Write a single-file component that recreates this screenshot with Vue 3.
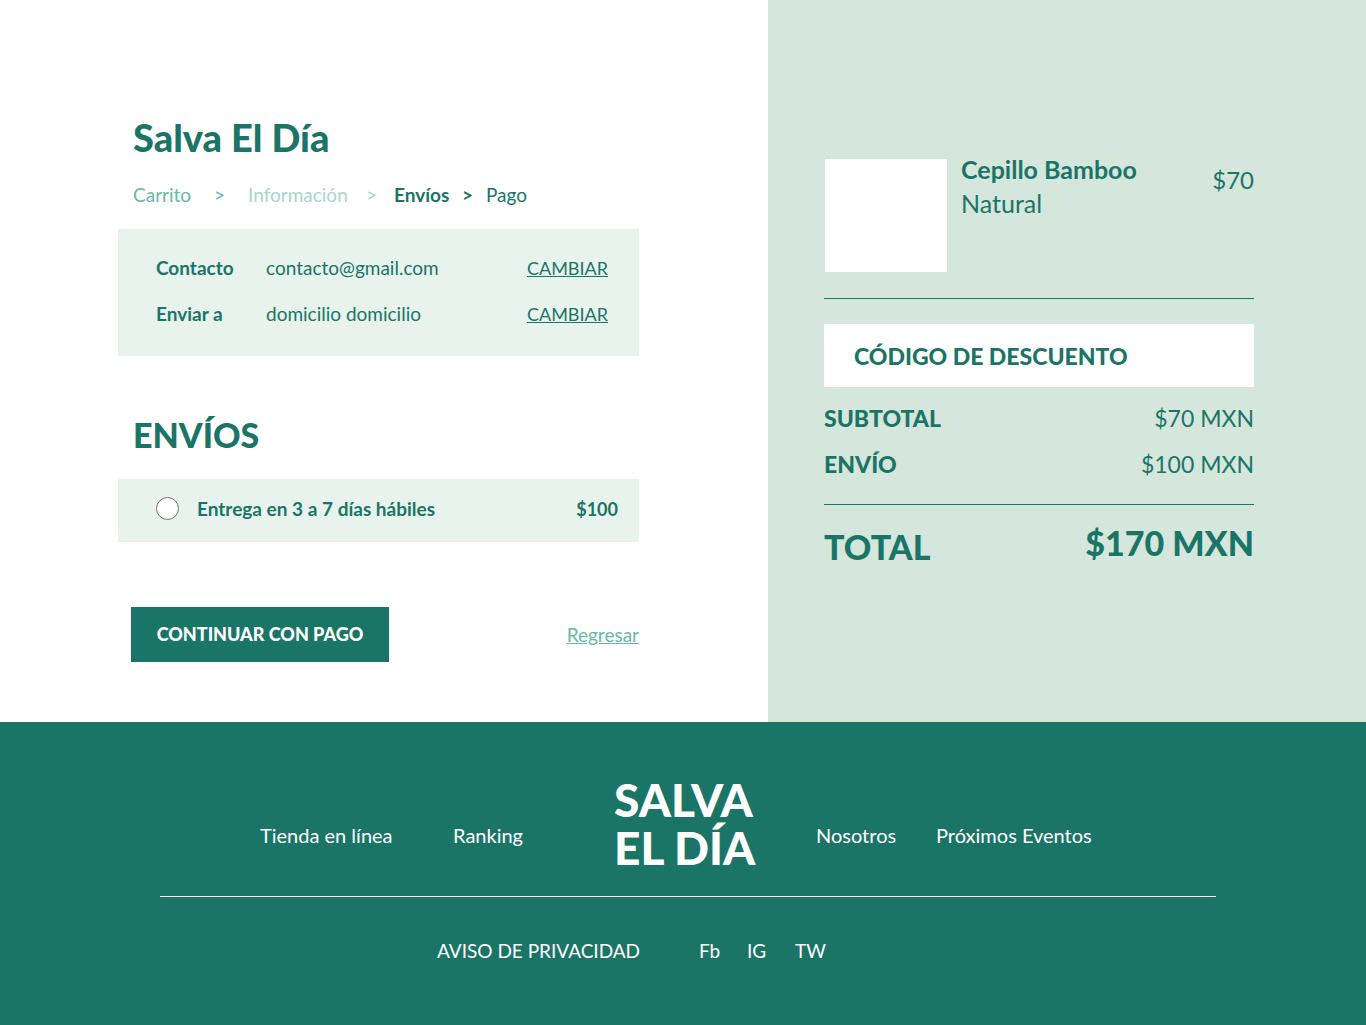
<script setup>
import { ref } from 'vue'

const steps = [
  { label: 'Carrito', tone: 'done', link: true },
  { label: '>', tone: 'done' },
  { label: 'Información', tone: 'faded', link: true },
  { label: '>', tone: 'faded' },
  { label: 'Envíos', tone: 'current', link: true },
  { label: '>', tone: 'current' },
  { label: 'Pago', tone: 'next', link: true }
]

const details = [
  { term: 'Contacto', value: 'contacto@gmail.com' },
  { term: 'Enviar a', value: 'domicilio domicilio' }
]

const code = ref('')
const shipping = ref('')
</script>

<template>
  <div class="page">
    <main class="checkout">
      <section class="form">
        <h1 class="title">Salva El Día</h1>
        <nav class="steps" aria-label="Pasos">
          <template v-for="(step, i) in steps" :key="i">
            <a v-if="step.link" href="#" :class="step.tone">{{ step.label }}</a>
            <span v-else :class="step.tone">{{ step.label }}</span>
          </template>
        </nav>

        <div class="card details">
          <div v-for="row in details" :key="row.term" class="detail">
            <strong>{{ row.term }}</strong>
            <span>{{ row.value }}</span>
            <a href="#">CAMBIAR</a>
          </div>
        </div>

        <h2 class="title shipping-title">ENVÍOS</h2>
        <div class="card option">
          <input id="standard" v-model="shipping" type="radio" name="shipping" value="standard" />
          <label for="standard">Entrega en 3 a 7 días hábiles</label>
          <span class="cost">$100</span>
        </div>

        <div class="actions">
          <button type="button">CONTINUAR CON PAGO</button>
          <a href="#">Regresar</a>
        </div>
      </section>

      <aside class="summary">
        <div class="product">
          <div class="thumb"></div>
          <div class="name">
            <strong>Cepillo Bamboo</strong>
            <span>Natural</span>
          </div>
          <span class="price">$70</span>
        </div>
        <hr />
        <input v-model="code" class="code" type="text" placeholder="CÓDIGO DE DESCUENTO" aria-label="Código de descuento" />
        <div class="line"><strong>SUBTOTAL</strong><span>$70 MXN</span></div>
        <div class="line"><strong>ENVÍO</strong><span>$100 MXN</span></div>
        <hr />
        <div class="total"><span>TOTAL</span><span class="amount">$170 MXN</span></div>
      </aside>
    </main>

    <footer class="footer">
      <nav class="links" aria-label="Principal">
        <a class="first" href="#">Tienda en línea</a>
        <a href="#">Ranking</a>
        <a class="brand" href="#">SALVA<br />EL DÍA</a>
        <a href="#">Nosotros</a>
        <a href="#">Próximos Eventos</a>
      </nav>
      <nav class="legal" aria-label="Legal y redes">
        <a href="#">AVISO DE PRIVACIDAD</a>
        <a href="#">Fb</a>
        <a href="#">IG</a>
        <a href="#">TW</a>
      </nav>
    </footer>
  </div>
</template>

<style>
body {
  margin: 0;
}
</style>

<style scoped>
.page {
  --green: #1b7566;
  display: flex;
  flex-direction: column;
  min-height: 100vh;
  font-family: Lato, "Liberation Sans", sans-serif;
  font-size: 19px;
  line-height: 24px;
  color: var(--green);
  background: #fff;
}

.page *,
.page {
  box-sizing: border-box;
}

a {
  color: inherit;
}

.checkout {
  display: grid;
  grid-template-columns: 768fr 598fr;
}

.form {
  padding: 117px 129px 60px 118px;
}

.title {
  margin: 0 0 0 15px;
  font-size: 38px;
  line-height: 40px;
  font-weight: 900;
}

.steps {
  display: grid;
  grid-template-columns: 81px 34px 118px 28px 68px 24px auto;
  margin: 26px 0 22px 15px;
}

.steps a {
  text-decoration: none;
}

.done {
  color: #68b9a8;
}

.faded {
  color: #a9d6cb;
}

.current {
  font-weight: 700;
}

.card {
  background: #e8f3ed;
}

.details {
  display: grid;
  gap: 22px;
  padding: 27px 31px 30px 38px;
}

.detail {
  display: grid;
  grid-template-columns: 110px 1fr auto;
}

.detail a {
  font-size: 18px;
}

.shipping-title {
  margin-top: 59px;
  margin-bottom: 24px;
  font-size: 34px;
}

.option {
  display: flex;
  align-items: center;
  height: 63px;
  padding: 0 21px 4px 38px;
  font-weight: 700;
}

.option input {
  appearance: none;
  width: 23px;
  height: 23px;
  margin: 0 18px 0 0;
  border: 1px solid #707070;
  border-radius: 50%;
  background: #fff;
}

.option input:checked {
  background: var(--green);
}

.option label {
  flex: 1;
}

.cost {
  font-size: 18px;
}

.actions {
  display: flex;
  align-items: center;
  justify-content: space-between;
  margin: 65px 0 0 13px;
}

.actions button {
  width: 258px;
  height: 55px;
  padding: 0 0 2px;
  border: 0;
  background: var(--green);
  color: #fff;
  font: inherit;
  font-size: 18px;
  font-weight: 900;
}

.actions a {
  color: #68b9a8;
}

.summary {
  padding: 152px 112px 60px 56px;
  background: #d5e6dc;
  font-size: 24px;
  line-height: 34px;
}

.product {
  display: flex;
  align-items: flex-start;
}

.thumb {
  width: 122px;
  height: 113px;
  margin: 7px 14px 0 1px;
  background: #fff;
}

.name {
  display: grid;
  flex: 1;
  font-size: 25px;
}

.price {
  margin-top: 11px;
}

hr {
  height: 1px;
  margin: 26px 0 25px;
  border: 0;
  background: var(--green);
}

.code {
  display: block;
  width: 100%;
  height: 63px;
  margin-bottom: 14px;
  padding: 0 30px;
  border: 0;
  border-radius: 0;
  background: #fff;
  color: var(--green);
  font: inherit;
  font-weight: 900;
  font-size: 23px;
}

.code::placeholder {
  color: var(--green);
  opacity: 1;
}

.line {
  display: flex;
  justify-content: space-between;
  margin-bottom: 12px;
  font-size: 23px;
}

.line strong {
  font-weight: 900;
}

.line + hr {
  margin: 23px 0 14px;
}

.total {
  display: flex;
  align-items: flex-start;
  justify-content: space-between;
  font-size: 34px;
  line-height: 48px;
  font-weight: 900;
}

.total > :first-child {
  padding-top: 4px;
}

.footer {
  flex: 1;
  padding: 54px 150px 60px 160px;
  background: var(--green);
  color: #fff;
  font-size: 20px;
}

.footer a {
  text-decoration: none;
}

.links {
  display: grid;
  grid-template-columns: 293fr 161fr 202fr 120fr 280fr;
  align-items: end;
  padding-bottom: 24px;
  border-bottom: 1px solid #fff;
}

.links a {
  padding-bottom: 25px;
  white-space: nowrap;
}

.links .first {
  padding-left: 100px;
}

.links .brand {
  padding-bottom: 0;
  font-size: 46px;
  line-height: 48px;
  font-weight: 900;
}

.legal {
  display: grid;
  grid-template-columns: 262px 48px 48px 48px;
  justify-content: center;
  margin: 42px 96px 0 0;
  font-size: 19px;
}
</style>
